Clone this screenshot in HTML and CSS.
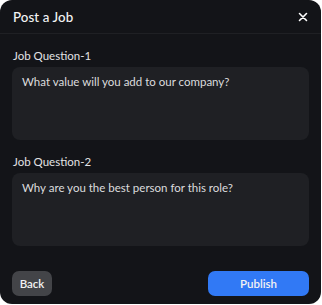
FILE: index.html
```html
<!DOCTYPE html>
<html>
<head>
<meta charset="utf-8">
<link rel="stylesheet" href="styles.css">
</head>
<body>
<div class="modal">
  <div class="modal-header">
    <div class="modal-title">Post a Job</div>
    <svg class="close" width="10" height="10" viewBox="0 0 10 10"><path d="M1.5 1.5 L8.5 8.5 M8.5 1.5 L1.5 8.5" stroke="#ffffff" stroke-width="1.6" stroke-linecap="round"/></svg>
  </div>
  <div class="modal-body">
    <div class="field">
      <div class="label">Job Question-1</div>
      <div class="input">What value will you add to our company?</div>
    </div>
    <div class="field">
      <div class="label">Job Question-2</div>
      <div class="input">Why are you the best person for this role?</div>
    </div>
  </div>
  <div class="modal-footer">
    <button class="btn btn-back">Back</button>
    <button class="btn btn-publish">Publish</button>
  </div>
</div>
</body>
</html>
```
FILE: styles.css
```css
* { box-sizing: border-box; }
html, body { margin: 0; padding: 0; background: #ffffff; }
body { font-family: "Lato", "Noto Sans", sans-serif; }
.modal {
  width: 321px;
  height: 304px;
  background: #131418;
  border-radius: 12px;
  display: flex;
  flex-direction: column;
}
.modal-header {
  height: 34px;
  border-bottom: 1px solid #1f2024;
  display: flex;
  align-items: center;
  justify-content: space-between;
  padding: 0 13px 0 13px;
}
.modal-title {
  color: #f4f4f5;
  font-size: 13.3px;
  font-weight: 500;
  letter-spacing: 0.1px;
}
.close { display: block; margin-right: 0; }
.modal-body {
  padding: 14px 12px 0 12px;
  display: flex;
  flex-direction: column;
  gap: 14px;
}
.field { display: flex; flex-direction: column; gap: 3px; }
.label {
  color: #e2e2e4;
  font-size: 11.5px;
  line-height: 16px;
  padding-left: 1px;
}
.input {
  height: 73px;
  background: #1f2024;
  border-radius: 8px;
  color: #dcdcde;
  font-size: 11.5px;
  line-height: 16px;
  padding: 7px 10px;
}
.modal-footer {
  margin-top: 25px;
  padding: 0 12px 0 12px;
  display: flex;
  justify-content: space-between;
}
.btn {
  border: none;
  height: 25px;
  border-radius: 7px;
  font-family: "Lato", "Noto Sans", sans-serif;
  font-size: 11.5px;
  font-weight: 600;
  color: #f2f2f3;
  padding: 0;
  cursor: pointer;
}
.btn-back { width: 40px; background: #434448; }
.btn-publish { width: 101px; background: #3179f5; }
```
